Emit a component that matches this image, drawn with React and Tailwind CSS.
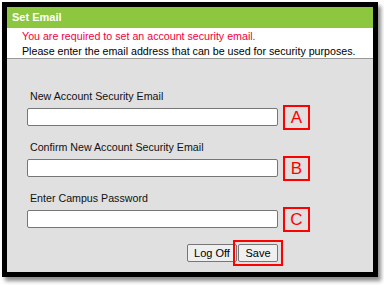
import React from 'react'

const font = { fontFamily: '"Liberation Sans", Arial, sans-serif' }

function Marker({ letter }) {
  return (
    <div className="ml-[5px] h-[25px] w-[27px] shrink-0 border-2 border-[#ff0000] flex items-center justify-center text-[17px] leading-none text-[#ff0000]">
      {letter}
    </div>
  )
}

function Field({ label, letter, type = 'text', first }) {
  return (
    <div className={first ? '' : 'mt-[15px]'}>
      <div className="pl-[23px] h-[13px] leading-[13px] text-[10.67px] text-[#111]">{label}</div>
      <div className="mt-[5px] h-[18px] pl-[20px] flex items-center">
        <input
          type={type}
          className="h-[18px] w-[251px] shrink-0 bg-white border border-[#767676] rounded-[2px] outline-none"
        />
        <Marker letter={letter} />
      </div>
    </div>
  )
}

export default function App() {
  return (
    <div className="w-[384px] h-[285px] bg-white pt-[2px] pl-[2px]" style={font}>
      <div className="w-[376px] h-[275px] border-[5px] border-black shadow-[3px_4px_4px_rgba(0,0,0,0.45)] flex flex-col">
        <div className="h-[21px] bg-[#8dc63f] pl-[5px] flex items-center text-[11px] font-bold text-white">
          Set Email
        </div>
        <div className="h-[30px] bg-white pl-[15px] pt-[1px] text-[10.67px] leading-[15px]">
          <div className="text-[#f5003a]">You are required to set an account security email.</div>
          <div className="text-black">Please enter the email address that can be used for security purposes.</div>
        </div>
        <div className="h-px bg-[#9a9a9a]" />
        <div className="flex-1 bg-[#e0e0e0] pt-[31px]">
          <Field first label="New Account Security Email" letter="A" />
          <Field label="Confirm New Account Security Email" letter="B" />
          <Field label="Enter Campus Password" letter="C" type="password" />
          <div className="mt-[16px] ml-[20px] w-[251px] h-[18px] flex items-center justify-end">
            <button className="h-[18px] w-[50px] bg-[#efefef] border border-[#767676] rounded-[2px] text-[11px] leading-none text-black">
              Log Off
            </button>
            <div className="relative ml-[-4px] mr-[-5px] border-2 border-[#ff0000] px-[3px] py-[2px] flex">
              <button className="h-[18px] w-[40px] bg-[#efefef] border border-[#767676] rounded-[2px] text-[11px] leading-none text-black">
                Save
              </button>
            </div>
          </div>
        </div>
      </div>
    </div>
  )
}
